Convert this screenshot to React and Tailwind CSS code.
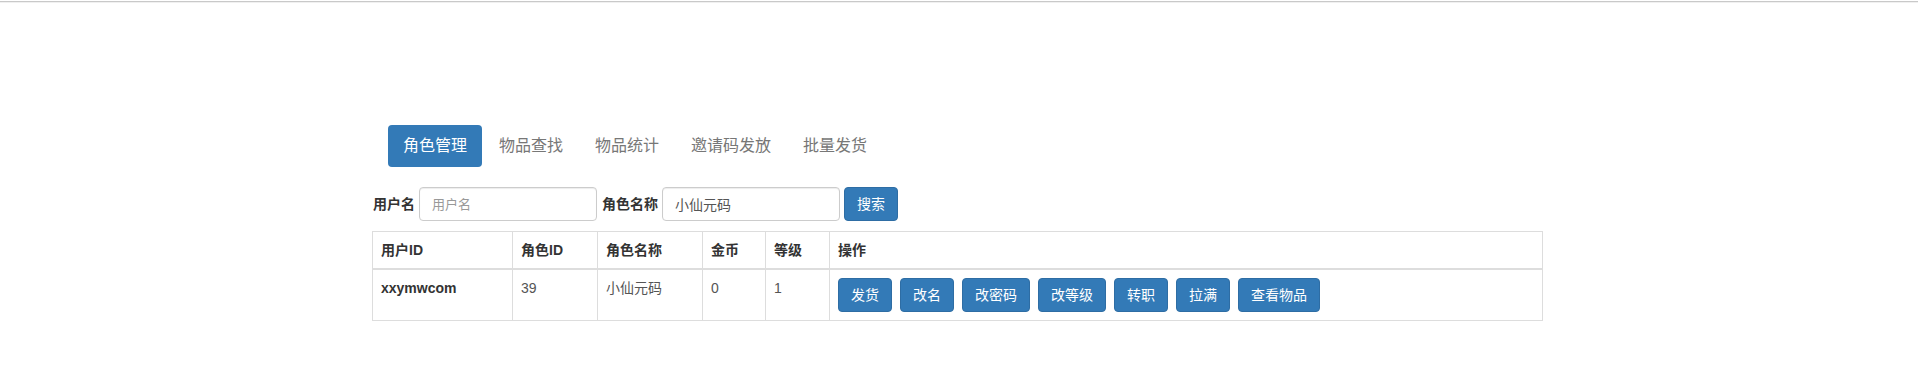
import { useState } from 'react'

const tabs = ['角色管理', '物品查找', '物品统计', '邀请码发放', '批量发货']
const actions = ['发货', '改名', '改密码', '改等级', '转职', '拉满', '查看物品']

export default function App() {
  const [active, setActive] = useState(0)
  const [userName, setUserName] = useState('')
  const [roleName, setRoleName] = useState('小仙元码')

  return (
    <div className="h-[380px] w-full bg-white font-['Liberation_Sans','Noto_Sans_CJK_SC',sans-serif] text-[14px] text-[#333]">
      <div className="h-[1px] bg-white" />
      <div className="h-[1px] bg-[#c9c9c9]" />
      <div className="h-[1px] bg-[#f0f0f0]" />

      <div className="ml-[372px] w-[1171px] pt-[122px]">
        {/* Tabs */}
        <ul className="flex gap-[2px] pl-[16px]">
          {tabs.map((t, i) => (
            <li key={t}>
              <button
                onClick={() => setActive(i)}
                className={
                  'rounded-[4px] px-[15px] py-[10px] text-[16px] leading-[22px] ' +
                  (active === i ? 'bg-[#337ab7] text-white' : 'text-[#777]')
                }
              >
                {t}
              </button>
            </li>
          ))}
        </ul>

        {/* Search */}
        <div className="mt-[20px] flex h-[34px] items-center pl-[1px]">
          <label className="font-bold text-[#333]">用户名</label>
          <input
            value={userName}
            onChange={(e) => setUserName(e.target.value)}
            placeholder="用户名"
            className="ml-[4px] h-[34px] w-[178px] rounded-[4px] border border-[#ccc] px-[12px] text-[14px] text-[#555] shadow-[inset_0_1px_1px_rgba(0,0,0,0.075)] outline-none placeholder:text-[13px] placeholder:text-[#999]"
          />
          <label className="ml-[5px] font-bold text-[#333]">角色名称</label>
          <input
            value={roleName}
            onChange={(e) => setRoleName(e.target.value)}
            placeholder="角色名称"
            className="ml-[4px] h-[34px] w-[178px] rounded-[4px] border border-[#ccc] px-[12px] text-[14px] text-[#555] shadow-[inset_0_1px_1px_rgba(0,0,0,0.075)] outline-none placeholder:text-[13px] placeholder:text-[#999]"
          />
          <button className="ml-[4px] h-[34px] rounded-[4px] border border-[#2e6da4] bg-[#337ab7] px-[12px] text-[14px] text-white">
            搜索
          </button>
        </div>

        {/* Result table */}
        <table className="mt-[10px] w-[1171px] table-fixed border-collapse">
          <colgroup>
            <col className="w-[140px]" />
            <col className="w-[85px]" />
            <col className="w-[105px]" />
            <col className="w-[63px]" />
            <col className="w-[64px]" />
            <col />
          </colgroup>
          <thead>
            <tr>
              {['用户ID', '角色ID', '角色名称', '金币', '等级', '操作'].map((h) => (
                <th
                  key={h}
                  className="border border-b-2 border-[#ddd] p-[8px] text-left align-bottom text-[14px] leading-[20px] font-bold text-[#333]"
                >
                  {h}
                </th>
              ))}
            </tr>
          </thead>
          <tbody>
            <tr>
              <td className="border border-[#ddd] p-[8px] align-top leading-[20px] font-bold text-[#333]">xxymwcom</td>
              <td className="border border-[#ddd] p-[8px] align-top leading-[20px] text-[#555]">39</td>
              <td className="border border-[#ddd] p-[8px] align-top leading-[20px] text-[#555]">小仙元码</td>
              <td className="border border-[#ddd] p-[8px] align-top leading-[20px] text-[#555]">0</td>
              <td className="border border-[#ddd] p-[8px] align-top leading-[20px] text-[#555]">1</td>
              <td className="border border-[#ddd] p-[8px] align-top">
                <div className="flex gap-[8px]">
                  {actions.map((a) => (
                    <button
                      key={a}
                      className="h-[34px] rounded-[4px] border border-[#2e6da4] bg-[#337ab7] px-[12px] text-[14px] leading-[20px] text-white"
                    >
                      {a}
                    </button>
                  ))}
                </div>
              </td>
            </tr>
          </tbody>
        </table>
      </div>
    </div>
  )
}
